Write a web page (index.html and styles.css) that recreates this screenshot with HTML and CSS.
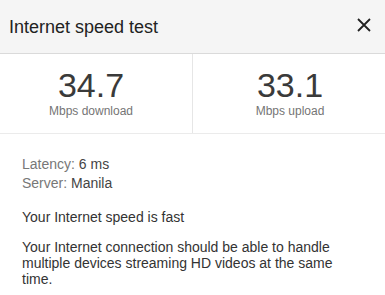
FILE: index.html
```html
<!DOCTYPE html>
<html>
<head>
<meta charset="utf-8">
<link rel="stylesheet" href="styles.css">
</head>
<body>
<div class="dialog">
  <div class="header">
    <div class="title">Internet speed test</div>
    <div class="close">
      <svg width="14" height="14" viewBox="0 0 14 14"><path d="M1 1 L13 13 M13 1 L1 13" stroke="#222" stroke-width="1.8" fill="none"/></svg>
    </div>
  </div>
  <div class="stats">
    <div class="stat left">
      <div class="num">34.7</div>
      <div class="label">Mbps download</div>
    </div>
    <div class="stat right">
      <div class="num">33.1</div>
      <div class="label">Mbps upload</div>
    </div>
  </div>
  <div class="info">
    <div class="meta">
      <div class="row"><span class="k">Latency:</span> <span class="v">6 ms</span></div>
      <div class="row"><span class="k">Server:</span> <span class="v">Manila</span></div>
    </div>
    <p class="verdict">Your Internet speed is fast</p>
    <p class="desc">Your Internet connection should be able to handle multiple devices streaming HD videos at the same time.</p>
  </div>
</div>
</body>
</html>
```
FILE: styles.css
```css
html, body {
  margin: 0;
  padding: 0;
  background: #fff;
  font-family: "Liberation Sans", Arial, sans-serif;
}
.dialog {
  width: 385px;
}
.header {
  height: 53px;
  background: #f5f5f5;
  border-bottom: 1px solid #dadada;
  display: flex;
  align-items: flex-start;
  justify-content: space-between;
  box-sizing: content-box;
}
.title {
  font-size: 18px;
  line-height: 20px;
  color: #222;
  padding: 17px 0 0 9px;
}
.close {
  padding: 18px 14px 0 0;
  line-height: 0;
}
.stats {
  display: flex;
  border-bottom: 1px solid #ebebeb;
}
.stat {
  flex: 1;
  display: flex;
  flex-direction: column;
  align-items: center;
  padding: 14px 0 15px;
}
.stat.left {
  border-right: 1px solid #e6e6e6;
  padding-right: 10px;
  flex: 0 0 182px;
}
.stat.right {
  padding-left: 2px;
}
.num {
  font-size: 34px;
  line-height: 34px;
  color: #3a3a3a;
}
.label {
  margin-top: 2px;
  font-size: 12px;
  line-height: 14px;
  color: #757575;
}
.info {
  padding: 21px 22px 0 22px;
}
.meta {
  font-size: 14px;
  line-height: 19px;
}
.k {
  color: #777;
}
.v {
  color: #444;
}
.verdict {
  margin: 16px 0 0;
  font-size: 14px;
  line-height: 16px;
  color: #333;
}
.desc {
  margin: 14px 0 0;
  font-size: 14px;
  line-height: 16px;
  color: #333;
}
```
